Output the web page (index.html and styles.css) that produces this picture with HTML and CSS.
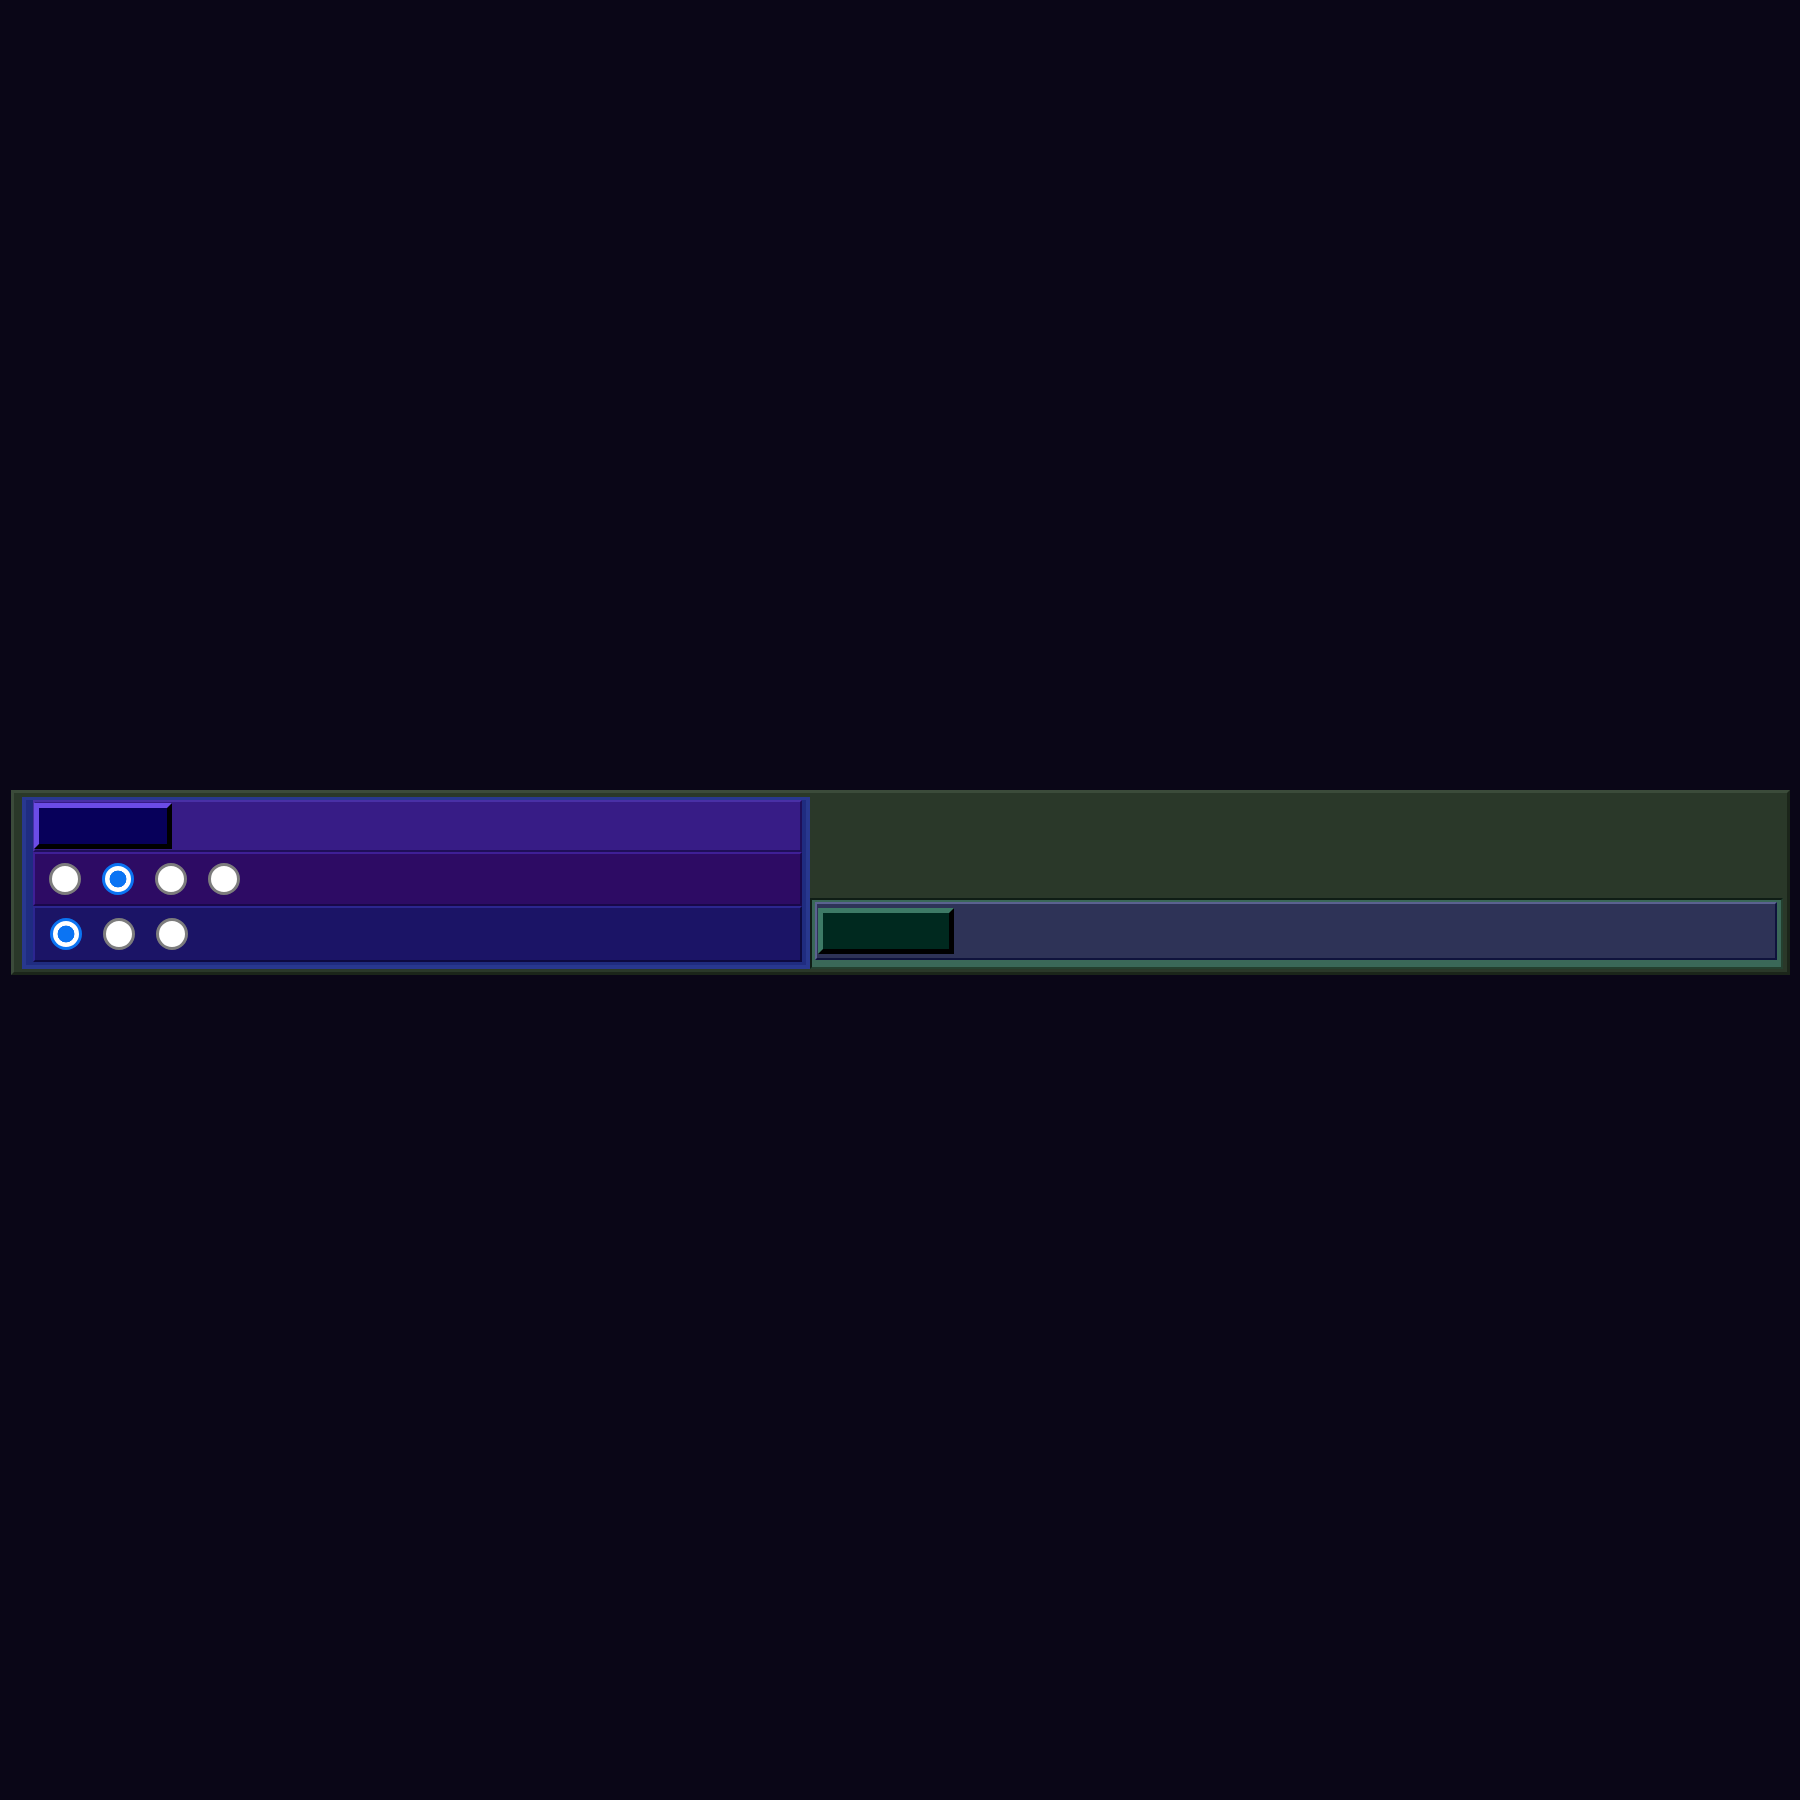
FILE: index.html
```html
<!DOCTYPE html>
<html lang="en">
<head>
<meta charset="utf-8">
<title>Panel</title>
<link rel="stylesheet" href="styles.css">
</head>
<body>
<div class="page">
  <div class="frame">
    <section class="left-panel">
      <div class="row row-head">
        <button class="btn btn-purple" type="button"></button>
      </div>
      <div class="row row-a">
        <input class="radio" type="radio" name="ga">
        <input class="radio" type="radio" name="ga" checked>
        <input class="radio" type="radio" name="ga">
        <input class="radio" type="radio" name="ga">
      </div>
      <div class="row row-b">
        <input class="radio" type="radio" name="gb" checked>
        <input class="radio" type="radio" name="gb">
        <input class="radio" type="radio" name="gb">
      </div>
    </section>
    <section class="right-panel">
      <div class="tray">
        <div class="bar">
          <button class="btn btn-green" type="button"></button>
        </div>
      </div>
    </section>
  </div>
</div>
</body>
</html>
```

FILE: styles.css
```css
* { box-sizing: border-box; }

html, body {
  margin: 0;
  background: #0a0617;
  font-family: "Liberation Sans", Arial, sans-serif;
}

.page {
  padding: 790px 10px 0 11px;
  min-height: 1800px;
}

.frame {
  width: 1779px;
  height: 185px;
  display: flex;
  align-items: stretch;
  background: #2a3829;
  border: 3px solid;
  border-color: #3b4b3a #1b251a #1b251a #3b4b3a;
  padding: 4px 4px 3px 8px;
}

.left-panel {
  width: 788px;
  flex: none;
  display: flex;
  flex-direction: column;
  background: #1f2c80;
  border-style: solid;
  border-width: 3px 4px 4px 4px;
  border-color: #28388f;
  padding: 0 4px 3px 7px;
}

.row {
  display: flex;
  align-items: center;
  border: 2px solid;
}

.row-head {
  height: 52px;
  align-items: flex-start;
  padding: 1px 0 0 0;
  background: #371c86;
  border-color: #4930a6 #1f0f58 #1f0f58 #4930a6;
}

.row-a {
  height: 54px;
  padding-left: 14px;
  gap: 21px;
  background: #2d0b64;
  border-color: #3f1f96 #19084a #19084a #3f1f96;
}

.row-b {
  height: 56px;
  padding-left: 15px;
  gap: 21px;
  background: #1b1466;
  border-color: #2c2690 #0d0a40 #0d0a40 #2c2690;
}

.btn {
  appearance: none;
  -webkit-appearance: none;
  display: block;
  margin: 0;
  padding: 0;
  height: 46px;
  border: 5px solid;
  cursor: pointer;
}

.btn-purple {
  width: 138px;
  margin-left: -1px;
  background: #07005a;
  border-color: #6b4ce6 #000 #000 #6b4ce6;
}

.btn-green {
  width: 136px;
  background: #00291f;
  border-color: #3d7a66 #000 #000 #3d7a66;
}

.radio {
  appearance: none;
  -webkit-appearance: none;
  flex: none;
  width: 32px;
  height: 32px;
  margin: 0;
  border-radius: 50%;
  background: #fff;
  border: 3px solid #7d7d7d;
}

.radio:checked {
  border: 3.5px solid #0b74f3;
  background: radial-gradient(circle, #0b74f3 0 8.2px, #ffffff 8.7px);
}

.right-panel {
  flex: 1;
  display: flex;
  flex-direction: column;
  justify-content: flex-end;
}

.tray {
  height: 71px;
  border: 2px solid;
  border-color: #0f1d15 #24402f #24402f #0f1d15;
  background: #3a6858;
  padding: 2px 4px 5px 3px;
}

.bar {
  height: 58px;
  display: flex;
  align-items: flex-start;
  background: #2e3357;
  border: 2px solid;
  border-color: #5a6290 #0f133c #0f133c #5a6290;
  padding: 4px 0 4px 1px;
}
```
